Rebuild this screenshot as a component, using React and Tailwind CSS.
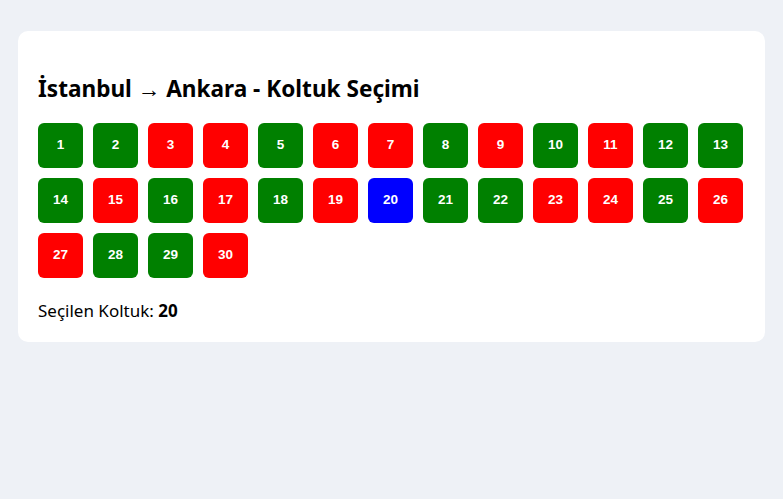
import React, { useState } from "react";

const taken = new Set([3, 4, 6, 7, 9, 11, 15, 17, 19, 23, 24, 26, 27, 30]);

export default function App() {
  const [selected, setSelected] = useState(20);
  const seats = Array.from({ length: 30 }, (_, i) => i + 1);
  return (
    <div className="min-h-[499px] w-full bg-[#eef1f6] pt-[31px] px-[18px]" style={{ fontFamily: '"Noto Sans", "Open Sans", sans-serif' }}>
      <div className="bg-white rounded-[10px] px-[20px] pt-[43px] pb-[20px]">
        <h2 className="text-[22.6px] font-bold leading-[30px] text-black m-0">İstanbul → Ankara - Koltuk Seçimi</h2>
        <div className="flex flex-wrap gap-[10px] mt-[19px]">
          {seats.map((n) => {
            const isTaken = taken.has(n);
            const isSel = n === selected;
            const bg = isSel ? "bg-[#0000ff]" : isTaken ? "bg-[#ff0000]" : "bg-[#008000]";
            return (
              <button
                key={n}
                onClick={() => !isTaken && setSelected(n)}
                className={`w-[45px] h-[45px] rounded-[6px] text-white font-bold text-[13.5px] flex items-center justify-center ${bg}`}
                style={{ fontFamily: '"Liberation Sans", Arial, sans-serif' }}
              >
                {n}
              </button>
            );
          })}
        </div>
        <p className="mt-[22px] text-[17px] leading-[22px] text-black">
          Seçilen Koltuk: <span className="font-bold">{selected}</span>
        </p>
      </div>
    </div>
  );
}
